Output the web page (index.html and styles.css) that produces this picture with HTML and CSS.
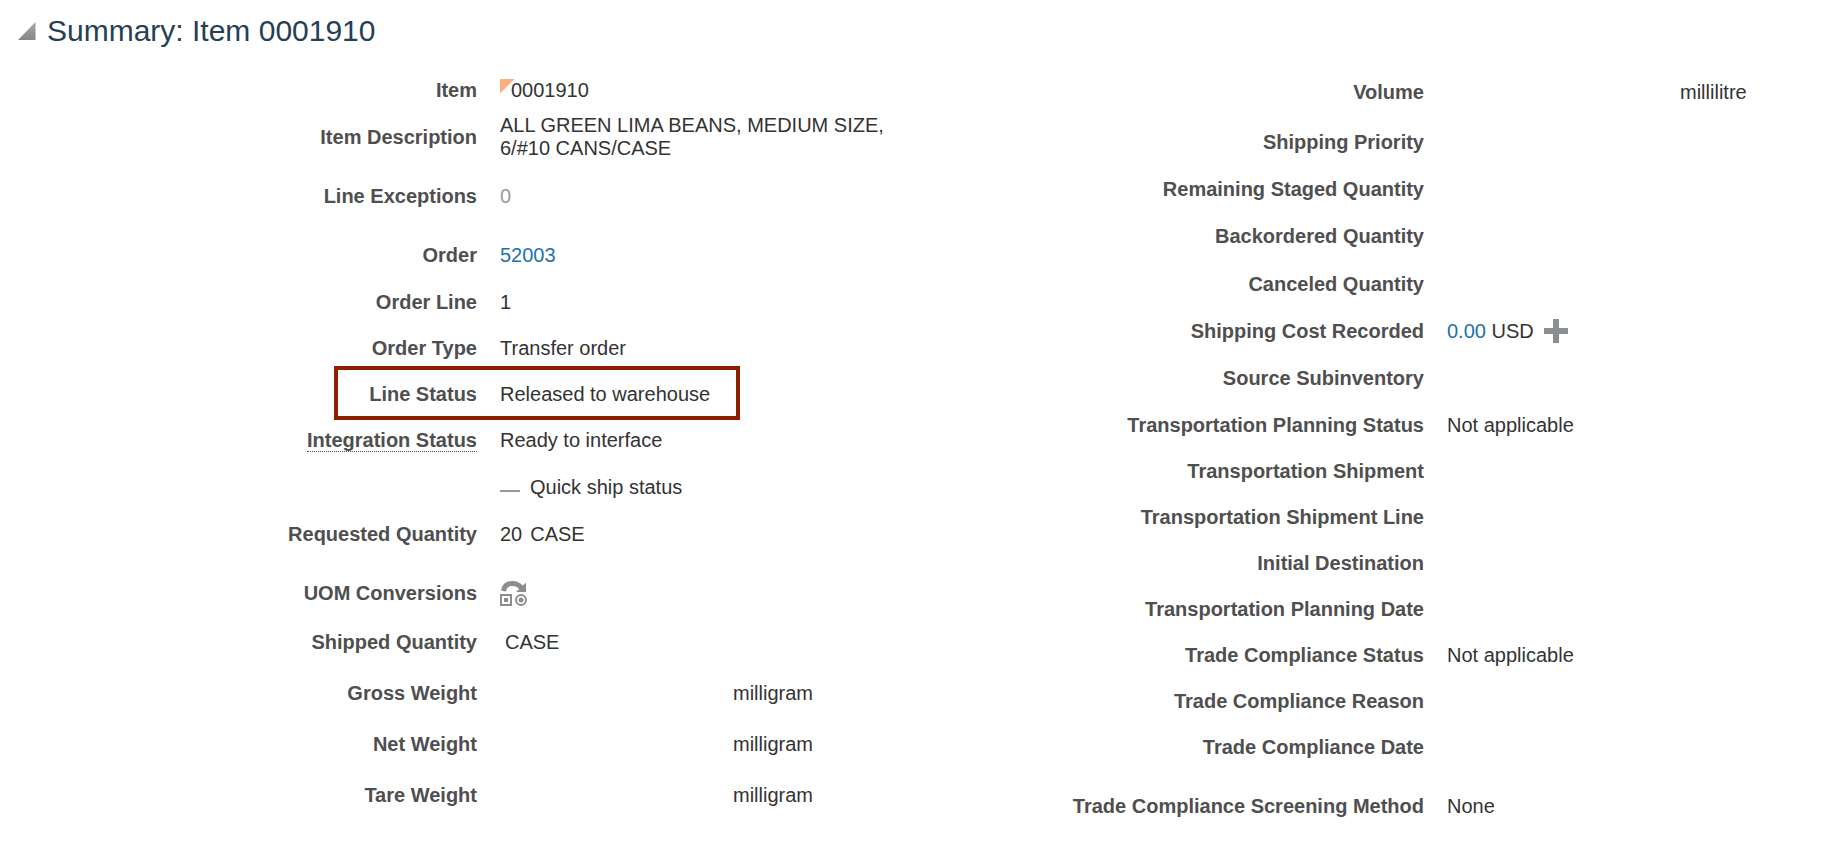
FILE: index.html
```html
<!DOCTYPE html>
<html lang="en">
<head>
    <meta charset="UTF-8">
    <meta name="viewport" content="width=device-width, initial-scale=1.0">
    <title>Summary: Item 0001910</title>
    <link rel="stylesheet" href="styles.css">
</head>
<body>
    <header class="section-header">
        <button type="button" class="icon-button" aria-label="Collapse summary" aria-expanded="true">
            <svg width="18" height="18" viewBox="0 0 18 18">
                <defs>
                    <linearGradient id="shade" x1="0" y1="0" x2="0" y2="1">
                        <stop offset="0" stop-color="#a8a8a8"/>
                        <stop offset="1" stop-color="#868686"/>
                    </linearGradient>
                </defs>
                <path d="M17.5 0V18H0Z" fill="url(#shade)"/>
            </svg>
        </button>
        <h1>Summary: Item 0001910</h1>
    </header>

    <main class="summary">
        <dl class="column">
            <div class="row">
                <dt>Item</dt>
                <dd class="flagged">0001910</dd>
            </div>
            <div class="row medium">
                <dt>Item Description</dt>
                <dd><span class="description">ALL GREEN LIMA BEANS, MEDIUM SIZE, 6/#10 CANS/CASE</span></dd>
            </div>
            <div class="row spaced">
                <dt>Line Exceptions</dt>
                <dd class="muted">0</dd>
            </div>
            <div class="row medium spaced">
                <dt>Order</dt>
                <dd><a href="#order">52003</a></dd>
            </div>
            <div class="row">
                <dt>Order Line</dt>
                <dd>1</dd>
            </div>
            <div class="row">
                <dt>Order Type</dt>
                <dd>Transfer order</dd>
            </div>
            <div class="row highlight">
                <dt>Line Status</dt>
                <dd>Released to warehouse</dd>
            </div>
            <div class="row">
                <dt><span class="hint">Integration Status</span></dt>
                <dd>Ready to interface</dd>
            </div>
            <div class="row medium">
                <dt></dt>
                <dd class="wide-gap"><span class="dash"></span><span>Quick ship status</span></dd>
            </div>
            <div class="row">
                <dt>Requested Quantity</dt>
                <dd class="quantity"><span>20</span><span>CASE</span></dd>
            </div>
            <div class="row medium spaced">
                <dt>UOM Conversions</dt>
                <dd>
                    <button type="button" class="icon-button" aria-label="UOM conversions">
                        <svg width="28" height="26" viewBox="0 0 28 26" fill="none" stroke="#8b8e90">
                            <path d="M3.5 11C4.5 5.5 8 3.500 12 3.500C16.500 3.500 19.500 5 21.500 8" stroke-width="5"/>
                            <path d="M26 2.500V12H16Z" fill="#8b8e90" stroke="none"/>
                            <path d="M1 15H11V25H1Z" stroke-width="2"/>
                            <path d="M4 18H8V22H4Z" fill="#8b8e90" stroke="none"/>
                            <circle cx="21" cy="20" r="5" stroke-width="2"/>
                            <circle cx="21" cy="20" r="2.500" fill="#8b8e90" stroke="none"/>
                        </svg>
                    </button>
                </dd>
            </div>
            <div class="row tall">
                <dt>Shipped Quantity</dt>
                <dd class="empty-quantity">CASE</dd>
            </div>
            <div class="row tall measure">
                <dt>Gross Weight</dt>
                <dd>milligram</dd>
            </div>
            <div class="row tall measure">
                <dt>Net Weight</dt>
                <dd>milligram</dd>
            </div>
            <div class="row tall measure">
                <dt>Tare Weight</dt>
                <dd>milligram</dd>
            </div>
        </dl>

        <dl class="column">
            <div class="row tall measure">
                <dt>Volume</dt>
                <dd>millilitre</dd>
            </div>
            <div class="row medium">
                <dt>Shipping Priority</dt>
                <dd></dd>
            </div>
            <div class="row">
                <dt>Remaining Staged Quantity</dt>
                <dd></dd>
            </div>
            <div class="row medium">
                <dt>Backordered Quantity</dt>
                <dd></dd>
            </div>
            <div class="row medium">
                <dt>Canceled Quantity</dt>
                <dd></dd>
            </div>
            <div class="row">
                <dt>Shipping Cost Recorded</dt>
                <dd class="cost">
                    <span><a href="#cost">0.00</a> USD</span>
                    <button type="button" class="icon-button" aria-label="Add shipping cost">
                        <svg width="24" height="24" viewBox="0 0 24 24">
                            <path d="M9 0H15V9H24V15H15V24H9V15H0V9H9Z" fill="#8b8e90"/>
                        </svg>
                    </button>
                </dd>
            </div>
            <div class="row medium">
                <dt>Source Subinventory</dt>
                <dd></dd>
            </div>
            <div class="row">
                <dt>Transportation Planning Status</dt>
                <dd>Not applicable</dd>
            </div>
            <div class="row">
                <dt>Transportation Shipment</dt>
                <dd></dd>
            </div>
            <div class="row">
                <dt>Transportation Shipment Line</dt>
                <dd></dd>
            </div>
            <div class="row">
                <dt>Initial Destination</dt>
                <dd></dd>
            </div>
            <div class="row">
                <dt>Transportation Planning Date</dt>
                <dd></dd>
            </div>
            <div class="row">
                <dt>Trade Compliance Status</dt>
                <dd>Not applicable</dd>
            </div>
            <div class="row">
                <dt>Trade Compliance Reason</dt>
                <dd></dd>
            </div>
            <div class="row">
                <dt>Trade Compliance Date</dt>
                <dd></dd>
            </div>
            <div class="row medium spaced">
                <dt>Trade Compliance Screening Method</dt>
                <dd>None</dd>
            </div>
        </dl>
    </main>
</body>
</html>
```
FILE: styles.css
```css
body {
    margin: 0;
    font-family: "Liberation Sans", Arial, sans-serif;
    font-size: 20px;
    line-height: 23px;
    color: #333;
    background-color: #fff;
}
.section-header {
    display: flex;
    align-items: center;
    gap: 11px;
    padding: 0 18px 5px;
}
h1 {
    margin: 0;
    font-size: 30px;
    line-height: 62px;
    font-weight: normal;
    color: #253f56;
}
.icon-button {
    display: flex;
    padding: 0;
    border: none;
    background: none;
    cursor: pointer;
}
.summary {
    display: grid;
    grid-template-columns: 947fr 885fr;
}
.column {
    margin: 0;
}
.row {
    position: relative;
    display: grid;
    grid-template-columns: 477px 1fr;
    column-gap: 23px;
    align-items: center;
    min-height: 46px;
}
.row.medium {
    min-height: 48px;
}
.row.tall {
    min-height: 51px;
}
.row.spaced {
    margin-top: 12px;
}
dt {
    font-weight: bold;
    text-align: right;
    color: #4f4f4f;
}
dd {
    position: relative;
    display: flex;
    align-items: center;
    margin: 0;
}
a {
    color: #2272a8;
    text-decoration: none;
}
a:hover {
    text-decoration: underline;
}
.description {
    max-width: 400px;
}
.muted {
    color: #999;
}
.hint {
    border-bottom: 1px dotted #4f4f4f;
}
.measure dd {
    padding-left: 233px;
}
.wide-gap {
    gap: 10px;
}
.quantity {
    gap: 8px;
}
.empty-quantity {
    padding-left: 5px;
}
.cost {
    gap: 10px;
}
.dash {
    width: 20px;
    border-top: 2px solid #999;
    margin-top: 8px;
}

/* changed-value marker in the corner of the field */
.flagged {
    padding-left: 11px;
}
.flagged::before {
    content: "";
    position: absolute;
    top: 0;
    left: 0;
    width: 15px;
    height: 15px;
    background-color: #fbb07c;
    clip-path: polygon(0 0, 100% 0, 0 100%);
}
.highlight::after {
    content: "";
    position: absolute;
    top: -5px;
    bottom: -3px;
    left: 334px;
    width: 398px;
    border: 4px solid #8f1f00;
    pointer-events: none;
}
```
